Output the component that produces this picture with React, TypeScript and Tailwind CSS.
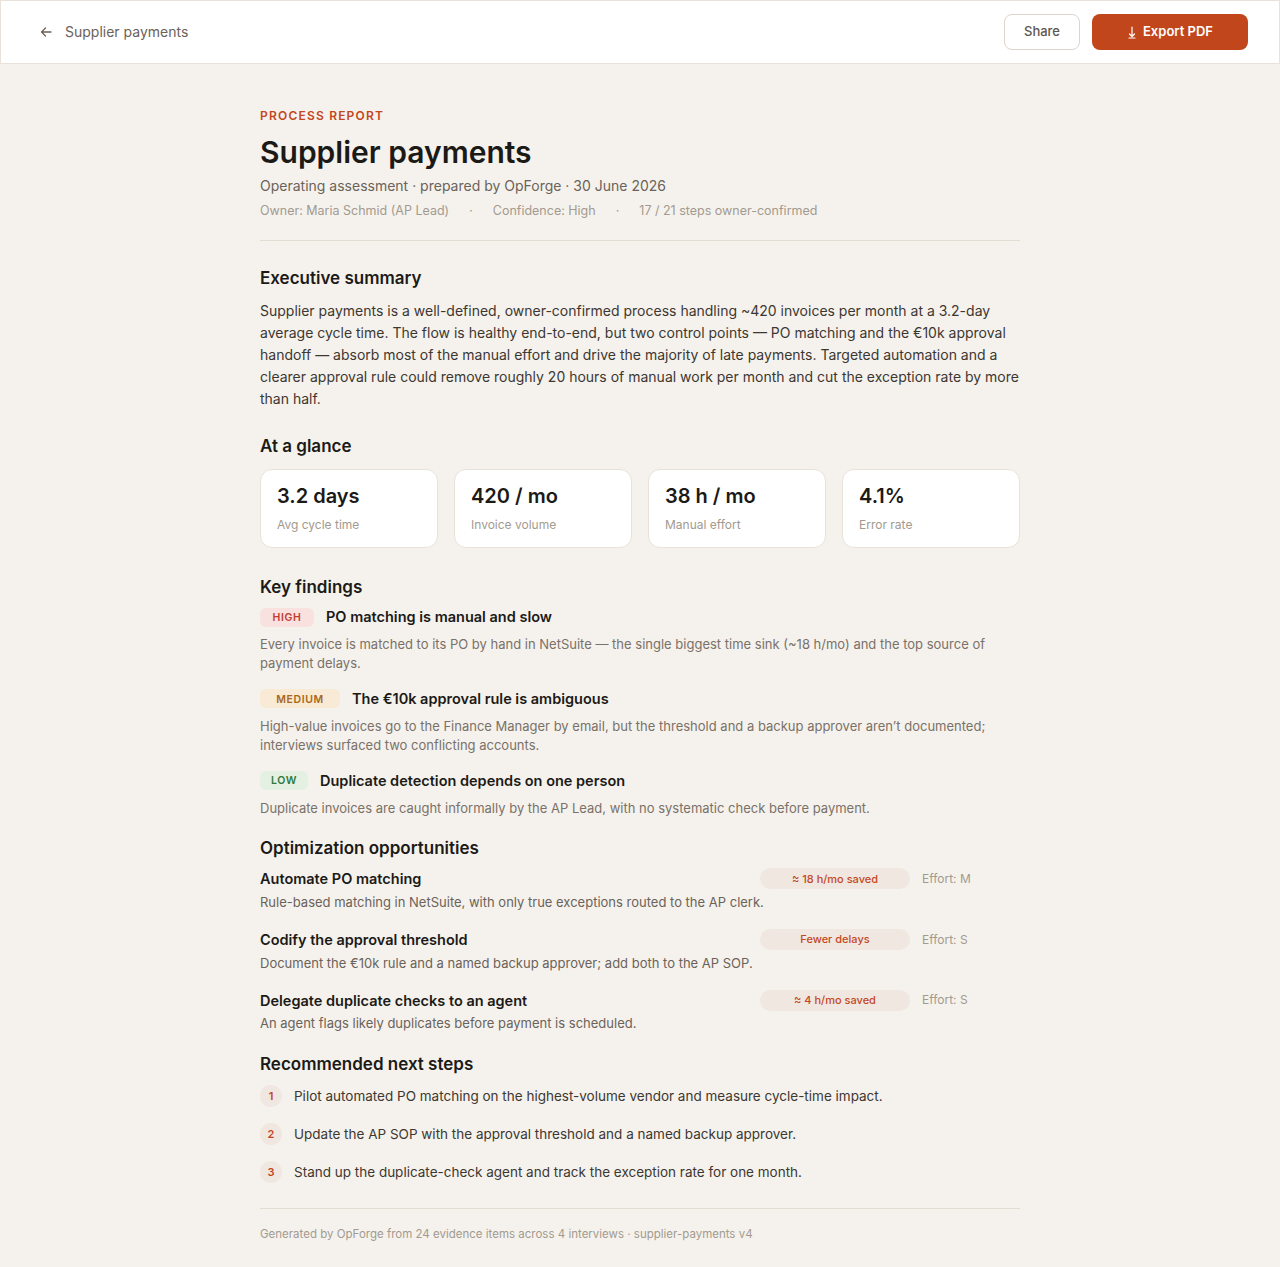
import React from 'react';

const findings = [
  {
    level: 'High',
    badge: 'bg-[#f8e1df] text-[#c23b2f] w-[54px]',
    title: 'PO matching is manual and slow',
    body: 'Every invoice is matched to its PO by hand in NetSuite — the single biggest time sink (~18 h/mo) and the top source of payment delays.',
  },
  {
    level: 'Medium',
    badge: 'bg-[#f8ead4] text-[#a8671a] w-[80px]',
    title: 'The €10k approval rule is ambiguous',
    body: 'High-value invoices go to the Finance Manager by email, but the threshold and a backup approver aren’t documented; interviews surfaced two conflicting accounts.',
  },
  {
    level: 'Low',
    badge: 'bg-[#e4f0e2] text-[#2f7a3a] w-[48px]',
    title: 'Duplicate detection depends on one person',
    body: 'Duplicate invoices are caught informally by the AP Lead, with no systematic check before payment.',
  },
];

const opportunities = [
  {
    title: 'Automate PO matching',
    body: 'Rule-based matching in NetSuite, with only true exceptions routed to the AP clerk.',
    gain: '≈ 18 h/mo saved',
    effort: 'Effort: M',
  },
  {
    title: 'Codify the approval threshold',
    body: 'Document the €10k rule and a named backup approver; add both to the AP SOP.',
    gain: 'Fewer delays',
    effort: 'Effort: S',
  },
  {
    title: 'Delegate duplicate checks to an agent',
    body: 'An agent flags likely duplicates before payment is scheduled.',
    gain: '≈ 4 h/mo saved',
    effort: 'Effort: S',
  },
];

const stats = [
  { value: '3.2 days', label: 'Avg cycle time' },
  { value: '420 / mo', label: 'Invoice volume' },
  { value: '38 h / mo', label: 'Manual effort' },
  { value: '4.1%', label: 'Error rate' },
];

const steps = [
  'Pilot automated PO matching on the highest-volume vendor and measure cycle-time impact.',
  'Update the AP SOP with the approval threshold and a named backup approver.',
  'Stand up the duplicate-check agent and track the exception rate for one month.',
];

const App: React.FC = () => {
  return (
    <div className="min-h-[1267px] bg-[#f5f2ed] text-[#1c1a17]" style={{ fontFamily: 'Inter, "Noto Sans", sans-serif' }}>
      <header className="h-16 bg-white border border-[#e8e2d9] flex items-center justify-between pl-[38px] pr-[31px]">
        <a href="#" className="flex items-center gap-3 text-sm text-[#6b6259]">
          <svg width="14" height="14" viewBox="0 0 14 14" fill="none" stroke="currentColor" strokeWidth="1.3" strokeLinecap="round" strokeLinejoin="round">
            <path d="M12 7H2.5M6.5 3L2.5 7l4 4" />
          </svg>
          Supplier payments
        </a>
        <div className="flex items-center gap-3">
          <button className="h-9 w-[76px] rounded-lg border border-[#ddd5ca] bg-white text-[13px] font-medium text-[#5e564e]">
            Share
          </button>
          <button className="h-9 w-[156px] rounded-lg bg-[#c2461c] text-[13px] font-semibold text-white flex items-center justify-center gap-1.5">
            <svg width="10" height="13" viewBox="0 0 10 13" fill="none" stroke="currentColor" strokeWidth="1.2" strokeLinecap="round" strokeLinejoin="round">
              <path d="M5 1v9.5M2.5 8l2.5 2.5L7.5 8M2 12h6" />
            </svg>
            Export PDF
          </button>
        </div>
      </header>

      <main className="mx-auto w-[760px] pt-[44px] pb-6">
        <div className="text-xs font-semibold tracking-[0.1em] text-[#c4471e]">PROCESS REPORT</div>
        <h1 className="mt-[10px] text-[30px] leading-9 font-semibold">Supplier payments</h1>
        <p className="mt-[6px] text-sm text-[#6b6259]">Operating assessment · prepared by OpForge · 30 June 2026</p>
        <div className="mt-[6px] flex items-center gap-[20px] text-[12.5px] text-[#a39a8f]">
          <span>Owner: Maria Schmid (AP Lead)</span>
          <span>·</span>
          <span>Confidence: High</span>
          <span>·</span>
          <span>17 / 21 steps owner-confirmed</span>
        </div>
        <div className="mt-[19px] border-t border-[#e2dcd3]" />

        <h2 className="mt-[25px] text-[17px] font-semibold">Executive summary</h2>
        <p className="mt-[9px] text-sm leading-[22px] text-[#3d3731]">
          Supplier payments is a well-defined, owner-confirmed process handling ~420 invoices per month at a 3.2-day average cycle time. The flow is healthy end-to-end, but two control points — PO matching and the €10k approval handoff — absorb most of the manual effort and drive the majority of late payments. Targeted automation and a clearer approval rule could remove roughly 20 hours of manual work per month and cut the exception rate by more than half.
        </p>

        <h2 className="mt-[24px] text-[17px] font-semibold">At a glance</h2>
        <div className="mt-[9px] grid grid-cols-4 gap-4">
          {stats.map((s) => (
            <div key={s.label} className="h-[79px] rounded-xl border border-[#e8e2d9] bg-white px-4 pt-[14px]">
              <div className="text-[20px] leading-6 font-semibold">{s.value}</div>
              <div className="mt-[9px] text-xs text-[#a39a8f]">{s.label}</div>
            </div>
          ))}
        </div>

        <h2 className="mt-[27px] text-[17px] font-semibold">Key findings</h2>
        <div className="mt-[6px] flex flex-col gap-[15px]">
          {findings.map((f) => (
            <div key={f.title}>
              <div className="flex items-center gap-3">
                <span className={`h-[19px] pt-px rounded-md flex items-center justify-center text-[10.5px] font-semibold uppercase tracking-[0.06em] ${f.badge}`}>
                  {f.level}
                </span>
                <span className="text-[14.5px] font-semibold">{f.title}</span>
              </div>
              <p className="mt-[7px] text-[13px] leading-[19px] text-[#7a7168]">{f.body}</p>
            </div>
          ))}
        </div>

        <h2 className="mt-[18px] text-[17px] font-semibold">Optimization opportunities</h2>
        <div className="mt-[7px] flex flex-col gap-[17px]">
          {opportunities.map((o) => (
            <div key={o.title}>
              <div className="grid grid-cols-[488px_150px_1fr] items-center gap-3">
                <span className="text-[14.5px] font-semibold">{o.title}</span>
                <span className="h-[21px] rounded-full bg-[#efe7e0] flex items-center justify-center text-[11px] font-medium text-[#c4471e]">
                  {o.gain}
                </span>
                <span className="text-xs text-[#a39a8f]">{o.effort}</span>
              </div>
              <p className="mt-[3px] text-[13px] leading-[19px] text-[#6b6259]">{o.body}</p>
            </div>
          ))}
        </div>

        <h2 className="mt-[19px] text-[17px] font-semibold">Recommended next steps</h2>
        <ol className="mt-[7px] flex flex-col gap-4">
          {steps.map((s, i) => (
            <li key={s} className="flex items-center gap-3">
              <span className="h-[22px] w-[22px] shrink-0 rounded-full bg-[#efe7e0] flex items-center justify-center text-[11px] font-semibold text-[#c4471e]">
                {i + 1}
              </span>
              <span className="text-[13.5px] text-[#3d3731]">{s}</span>
            </li>
          ))}
        </ol>

        <div className="mt-[25px] border-t border-[#e2dcd3]" />
        <p className="mt-[17px] text-[11.5px] text-[#a39a8f]">
          Generated by OpForge from 24 evidence items across 4 interviews · supplier-payments v4
        </p>
      </main>
    </div>
  );
};

export default App;
